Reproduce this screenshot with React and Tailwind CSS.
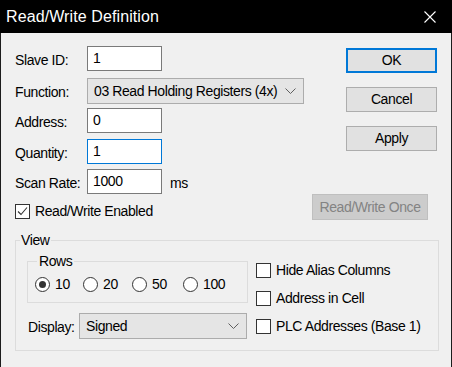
import React from "react"

const font = { fontFamily: '"Liberation Sans", Arial, sans-serif' }

function Field({ value, focused, width = "w-[75px]" }) {
  return (
    <div
      className={`${width} h-[25px] bg-white border flex items-center pl-[5px] ${
        focused ? "border-[#0078d7]" : "border-[#7a7a7a]"
      }`}
    >
      {value}
    </div>
  )
}

function Chevron() {
  return (
    <svg width="11" height="7" viewBox="0 0 11 7" className="shrink-0">
      <path d="M0.5 0.5 L5.5 5.5 L10.5 0.5" fill="none" stroke="#5f5f5f" strokeWidth="1" />
    </svg>
  )
}

function Combo({ value, width }) {
  return (
    <div
      className={`${width} h-[26px] bg-[#e5e5e5] border border-[#acacac] flex items-center justify-between pl-[6px] pr-[7px]`}
    >
      <span>{value}</span>
      <Chevron />
    </div>
  )
}

function Checkbox({ checked, label }) {
  return (
    <div className="flex items-center h-[16px]">
      <div className="w-[15px] h-[15px] bg-white border border-[#333] flex items-center justify-center shrink-0">
        {checked && (
          <svg width="13" height="13" viewBox="0 0 13 13">
            <path d="M2 6.5 L5 9.5 L11 2.5" fill="none" stroke="#333" strokeWidth="1.1" />
          </svg>
        )}
      </div>
      <span className="ml-[5px] whitespace-nowrap">{label}</span>
    </div>
  )
}

function Radio({ checked, label, width }) {
  return (
    <div className={`${width} flex items-center`}>
      <div className="w-[15px] h-[15px] rounded-full bg-white border border-[#333] flex items-center justify-center shrink-0">
        {checked && <div className="w-[7px] h-[7px] rounded-full bg-[#333]" />}
      </div>
      <span className="ml-[5px]">{label}</span>
    </div>
  )
}

function Button({ children, primary }) {
  return (
    <div
      className={`ml-[34px] w-[91px] h-[25px] bg-[#e1e1e1] flex items-center justify-center ${
        primary ? "border-2 border-[#0078d7]" : "border border-[#adadad]"
      }`}
    >
      {children}
    </div>
  )
}

export default function App() {
  return (
    <div
      className="w-[452px] h-[367px] bg-[#f0f0f0] flex flex-col text-[14px] tracking-[-0.4px] text-black overflow-hidden"
      style={font}
    >
      {/* Title bar */}
      <div className="h-[33px] bg-black flex items-center justify-between pl-[6px] pr-[16px] shrink-0">
        <span className="text-white text-[16px] tracking-[0.1px]">Read/Write Definition</span>
        <svg width="12" height="12" viewBox="0 0 12 12">
          <path d="M0.5 0.5 L11.5 11.5 M11.5 0.5 L0.5 11.5" stroke="#fff" strokeWidth="1.1" />
        </svg>
      </div>

      <div className="flex-1 border-x border-[#1c1c1c] pl-[14px]">
        <div className="flex">
          {/* Left form */}
          <div className="w-[297px] flex flex-col">
            <div className="mt-[13px] flex items-center">
              <span className="w-[72px] pt-[3px]">Slave ID:</span>
              <Field value="1" />
            </div>
            <div className="mt-[7px] flex items-center">
              <span className="w-[72px] pt-[3px]">Function:</span>
              <Combo value="03 Read Holding Registers (4x)" width="w-[217px]" />
            </div>
            <div className="mt-[4px] flex items-center">
              <span className="w-[72px] pt-[3px]">Address:</span>
              <Field value="0" />
            </div>
            <div className="mt-[6px] flex items-center">
              <span className="w-[72px] pt-[3px]">Quantity:</span>
              <Field value="1" focused />
            </div>
            <div className="mt-[5px] flex items-center">
              <span className="w-[72px] pt-[3px] whitespace-nowrap">Scan Rate:</span>
              <Field value="1000" />
              <span className="ml-[8px] pt-[3px]">ms</span>
            </div>
            <div className="mt-[9px]">
              <Checkbox checked label="Read/Write Enabled" />
            </div>
          </div>

          {/* Right buttons */}
          <div className="flex flex-col">
            <div className="mt-[15px]">
              <Button primary>OK</Button>
            </div>
            <div className="mt-[14px]">
              <Button>Cancel</Button>
            </div>
            <div className="mt-[14px]">
              <Button>Apply</Button>
            </div>
            <div className="mt-[43px] w-[116px] h-[26px] bg-[#cccccc] border border-[#bfbfbf] text-[#838383] flex items-center justify-center whitespace-nowrap">
              Read/Write Once
            </div>
          </div>
        </div>

        {/* View group */}
        <fieldset className="mt-[12px] w-[424px] h-[119px] border border-[#dcdcdc]">
          <legend className="ml-[4px] px-[1px] leading-[16px]">View</legend>
          <div className="flex pl-[11px]">
            <div className="flex flex-col">
              <fieldset className="mt-[5px] w-[221px] h-[50px] border border-[#dcdcdc]">
                <legend className="ml-[9px] px-[2px] leading-[16px]">Rows</legend>
                <div className="mt-[5px] pl-[7px] flex">
                  <Radio checked label="10" width="w-[48px]" />
                  <Radio label="20" width="w-[49px]" />
                  <Radio label="50" width="w-[51px]" />
                  <Radio label="100" width="w-[50px]" />
                </div>
              </fieldset>
              <div className="mt-[10px] flex items-center">
                <span className="w-[52px] pl-[1px] pt-[3px]">Display:</span>
                <Combo value="Signed" width="w-[168px]" />
              </div>
            </div>
            <div className="ml-[8px] pt-[14px] flex flex-col gap-[12px]">
              <Checkbox label="Hide Alias Columns" />
              <Checkbox label="Address in Cell" />
              <Checkbox label="PLC Addresses (Base 1)" />
            </div>
          </div>
        </fieldset>
      </div>
    </div>
  )
}
